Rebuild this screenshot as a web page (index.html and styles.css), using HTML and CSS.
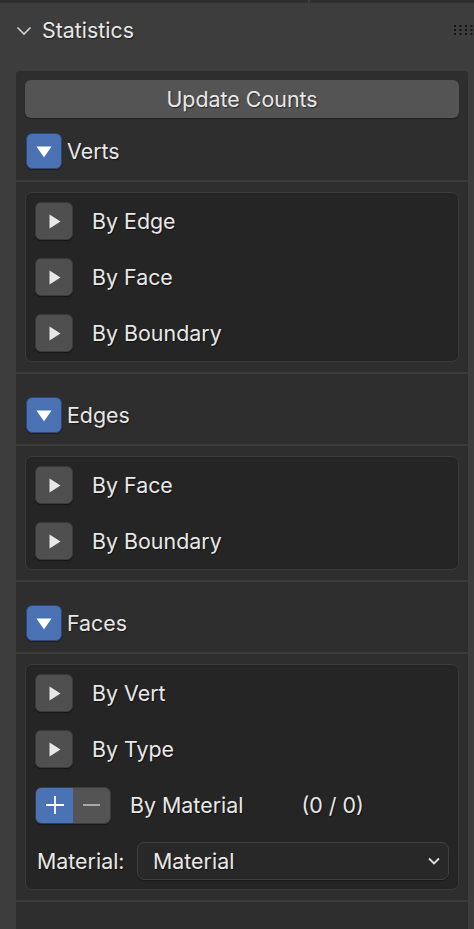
FILE: index.html
```html
<!DOCTYPE html>
<html>
<head>
<meta charset="utf-8">
<link rel="stylesheet" href="styles.css">
</head>
<body>
<div class="topstrip"><div class="topstrip-a"></div><div class="topstrip-b"></div></div>
<div class="header">
  <svg class="chev" width="16" height="10" viewBox="0 0 16 10"><path d="M1.5 1.5 L8 8 L14.5 1.5" fill="none" stroke="#cfcfcf" stroke-width="1.6"/></svg>
  <span class="title">Statistics</span>
  <svg class="grip" width="22" height="12" viewBox="0 0 22 12">
    <g fill="#141414">
      <rect x="1" y="1" width="2" height="2"/><rect x="6.5" y="1" width="2" height="2"/><rect x="12" y="1" width="2" height="2"/><rect x="17.5" y="1" width="2" height="2"/>
      <rect x="1" y="5" width="2" height="2"/><rect x="6.5" y="5" width="2" height="2"/><rect x="12" y="5" width="2" height="2"/><rect x="17.5" y="5" width="2" height="2"/>
      <rect x="1" y="9" width="2" height="2"/><rect x="6.5" y="9" width="2" height="2"/><rect x="12" y="9" width="2" height="2"/><rect x="17.5" y="9" width="2" height="2"/>
    </g>
  </svg>
</div>
<div class="panel">
  <div class="update">Update Counts</div>

  <div class="sub-head first">
    <span class="tog-blue"><svg width="16" height="12" viewBox="0 0 16 12"><path d="M0.5 0.5 H15.5 L8 11.5 Z" fill="#fff"/></svg></span>
    <span class="sub-title">Verts</span>
  </div>
  <div class="sep"></div>
  <div class="box">
    <div class="row"><span class="tog"><svg width="12" height="15" viewBox="0 0 12 15"><path d="M0.5 0.5 V14.5 L11.5 7.5 Z" fill="#e8e8e8"/></svg></span><span class="lbl">By Edge</span></div>
    <div class="row"><span class="tog"><svg width="12" height="15" viewBox="0 0 12 15"><path d="M0.5 0.5 V14.5 L11.5 7.5 Z" fill="#e8e8e8"/></svg></span><span class="lbl">By Face</span></div>
    <div class="row"><span class="tog"><svg width="12" height="15" viewBox="0 0 12 15"><path d="M0.5 0.5 V14.5 L11.5 7.5 Z" fill="#e8e8e8"/></svg></span><span class="lbl">By Boundary</span></div>
  </div>
  <div class="sep sep-after"></div>

  <div class="sub-head">
    <span class="tog-blue"><svg width="16" height="12" viewBox="0 0 16 12"><path d="M0.5 0.5 H15.5 L8 11.5 Z" fill="#fff"/></svg></span>
    <span class="sub-title">Edges</span>
  </div>
  <div class="sep"></div>
  <div class="box">
    <div class="row"><span class="tog"><svg width="12" height="15" viewBox="0 0 12 15"><path d="M0.5 0.5 V14.5 L11.5 7.5 Z" fill="#e8e8e8"/></svg></span><span class="lbl">By Face</span></div>
    <div class="row"><span class="tog"><svg width="12" height="15" viewBox="0 0 12 15"><path d="M0.5 0.5 V14.5 L11.5 7.5 Z" fill="#e8e8e8"/></svg></span><span class="lbl">By Boundary</span></div>
  </div>
  <div class="sep sep-after"></div>

  <div class="sub-head">
    <span class="tog-blue"><svg width="16" height="12" viewBox="0 0 16 12"><path d="M0.5 0.5 H15.5 L8 11.5 Z" fill="#fff"/></svg></span>
    <span class="sub-title">Faces</span>
  </div>
  <div class="sep"></div>
  <div class="box">
    <div class="row"><span class="tog"><svg width="12" height="15" viewBox="0 0 12 15"><path d="M0.5 0.5 V14.5 L11.5 7.5 Z" fill="#e8e8e8"/></svg></span><span class="lbl">By Vert</span></div>
    <div class="row"><span class="tog"><svg width="12" height="15" viewBox="0 0 12 15"><path d="M0.5 0.5 V14.5 L11.5 7.5 Z" fill="#e8e8e8"/></svg></span><span class="lbl">By Type</span></div>
    <div class="row">
      <span class="pm">
        <span class="pm-plus"><svg width="18" height="18" viewBox="0 0 18 18"><path d="M9 0 V18 M0 9 H18" stroke="#fff" stroke-width="1.8"/></svg></span>
        <span class="pm-minus"><svg width="17" height="4" viewBox="0 0 17 4"><path d="M0 2 H17" stroke="#a8a8a8" stroke-width="1.8"/></svg></span>
      </span>
      <span class="lbl mat-lbl">By Material</span>
      <span class="count">(0 / 0)</span>
    </div>
    <div class="row">
      <span class="mat-key">Material:</span>
      <span class="dropdown"><span class="dd-text">Material</span><svg class="dd-chev" width="12" height="8" viewBox="0 0 12 8"><path d="M1 1.5 L6 6.5 L11 1.5" fill="none" stroke="#e0e0e0" stroke-width="1.8"/></svg></span>
    </div>
  </div>
  <div class="sep sep-after"></div>
  <div class="tail"></div>
</div>
</body>
</html>
```
FILE: styles.css
```css
html, body {
  margin: 0;
  padding: 0;
  background: #3d3d3d;
  height: 929px;
  overflow: hidden;
}
body {
  font-family: Inter, "Noto Sans", sans-serif;
  color: #e8e8e8;
}
.topstrip {
  height: 3px;
  display: flex;
}
.topstrip-a {
  width: 308px;
  background: #2f2f2f;
  margin-right: 2px;
}
.topstrip-b {
  flex: 1;
  background: #2f2f2f;
}
.header {
  height: 68px;
  display: flex;
  align-items: center;
  padding-left: 16px;
  box-sizing: border-box;
  padding-bottom: 14px;
}
.chev {
  margin-right: 10px;
  margin-top: 2px;
}
.title {
  font-size: 21.4px;
  text-shadow: 1px 1px 1px rgba(0,0,0,0.55);
  flex: 1;
}
.grip {
  margin-right: -1px;
}
.panel {
  margin-left: 16px;
  width: 452px;
  background: #2e2e2e;
  border-radius: 4px 4px 0 0;
  display: flex;
  flex-direction: column;
  padding-top: 9px;
  height: 860px;
  box-sizing: border-box;
}
.update {
  margin: 0 9px;
  height: 38px;
  background: #545454;
  border-radius: 6px;
  box-shadow: 0 1px 1px rgba(0,0,0,0.35);
  display: flex;
  align-items: center;
  justify-content: center;
  font-size: 21.4px;
  text-shadow: 1px 1px 1px rgba(0,0,0,0.5);
}
.sub-head {
  display: flex;
  align-items: center;
  padding: 23px 10px 11px;
}
.sub-head.first {
  padding-top: 15px;
}
.tog-blue {
  width: 36px;
  height: 36px;
  box-sizing: border-box;
  background: #4a72b4;
  border: 1px solid #2f4770;
  border-radius: 6px;
  display: flex;
  align-items: center;
  justify-content: center;
  box-shadow: 0 1px 1px rgba(0,0,0,0.35);
}
.tog-blue svg {
  margin-top: 1px;
}
.sub-title {
  margin-left: 5px;
  font-size: 21.4px;
  text-shadow: 1px 1px 1px rgba(0,0,0,0.55);
}
.sep {
  height: 2px;
  background: #3a3a3a;
}
.sep-after {
  margin-top: 10px;
}
.box {
  margin: 10px 9px 0;
  background: #252525;
  border: 1px solid #3a3a3a;
  border-radius: 7px;
  padding: 9px;
  display: flex;
  flex-direction: column;
  gap: 18px;
}
.row {
  height: 38px;
  display: flex;
  align-items: center;
}
.tog {
  width: 38px;
  height: 38px;
  box-sizing: border-box;
  background: #4f4f4f;
  border: 1px solid #3b3b3b;
  border-radius: 6px;
  display: flex;
  align-items: center;
  justify-content: center;
  box-shadow: 0 1px 1px rgba(0,0,0,0.4);
}
.tog svg {
  margin-left: 2px;
}
.lbl {
  margin-left: 19px;
  font-size: 21.4px;
  text-shadow: 1px 1px 1px rgba(0,0,0,0.55);
}
.pm {
  width: 76px;
  height: 37px;
  box-sizing: border-box;
  border: 1px solid #3b3b3b;
  border-radius: 6px;
  display: flex;
  overflow: hidden;
  box-shadow: 0 1px 1px rgba(0,0,0,0.4);
}
.pm-plus {
  width: 37px;
  background: #4a72b4;
  display: flex;
  align-items: center;
  justify-content: center;
}
.pm-minus {
  flex: 1;
  background: #545454;
  display: flex;
  align-items: center;
  justify-content: center;
}
.count {
  margin-left: 58px;
  font-size: 21.4px;
  text-shadow: 1px 1px 1px rgba(0,0,0,0.55);
}
.mat-key {
  margin-left: 2px;
  width: 100px;
  font-size: 21.4px;
  text-shadow: 1px 1px 1px rgba(0,0,0,0.55);
}
.dropdown {
  flex: 1;
  height: 38px;
  box-sizing: border-box;
  background: #282828;
  border: 1px solid #3e3e3e;
  border-radius: 7px;
  display: flex;
  align-items: center;
  padding: 0 8px 0 15px;
  box-shadow: 0 1px 1px rgba(0,0,0,0.3);
}
.dd-text {
  flex: 1;
  font-size: 21.4px;
  text-shadow: 1px 1px 1px rgba(0,0,0,0.55);
}
.tail {
  flex: 1;
}
```
